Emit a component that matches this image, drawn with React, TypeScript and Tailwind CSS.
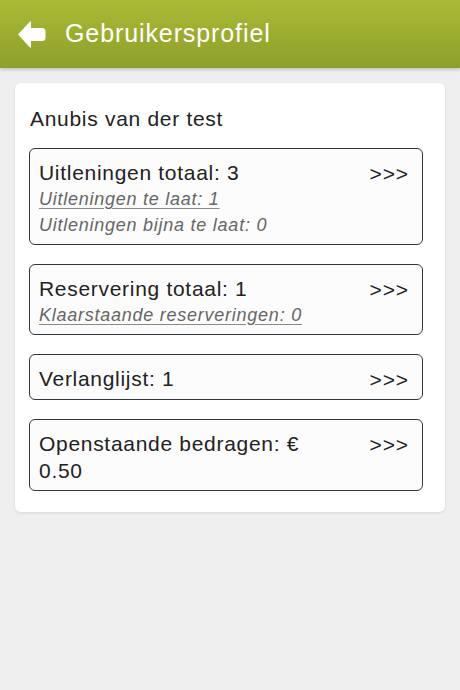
import React from 'react'

const BackArrow: React.FC = () => (
  <svg width="29" height="29" viewBox="0 0 29 29" className="shrink-0">
    <path
      d="M1 14.5 L13 1.5 Q14 0.8 14 2 L14 8 L25 8 Q28.5 8 28.5 11.5 L28.5 17.5 Q28.5 21 25 21 L14 21 L14 27 Q14 28.2 13 27.5 Z"
      fill="#ffffff"
    />
  </svg>
)

interface RowProps {
  title: string
  lines?: { text: string; link?: boolean }[]
}

const Row: React.FC<RowProps> = ({ title, lines = [] }) => (
  <div className="flex rounded-[6px] border border-[#2d3742] bg-[#fcfcfc] pt-[10px] pb-[6px] pl-[9px] pr-[13px]">
    <div className="flex-1">
      <div className="text-[21px] leading-[27px] tracking-[0.7px] text-[#222]">{title}</div>
      {lines.map((l, i) => (
        <div
          key={i}
          className={
            l.link
              ? 'text-[18px] leading-[26px] tracking-[0.75px] italic text-[#666] underline decoration-[#8a8a8a] underline-offset-[3px]'
              : 'text-[18px] leading-[26px] tracking-[0.75px] italic text-[#666]'
          }
        >
          {l.text}
        </div>
      ))}
    </div>
    <div className="w-[82px] pt-[1px] text-right text-[21px] leading-[27px] tracking-[0.9px] text-[#222]">
      &gt;&gt;&gt;
    </div>
  </div>
)

export default function App() {
  return (
    <div
      className="min-h-[690px] w-[460px] bg-[#efefef]"
      style={{ fontFamily: '"Liberation Sans", Arial, sans-serif' }}
    >
      <div className="flex h-[68px] items-center gap-[19px] bg-gradient-to-b from-[#abba35] to-[#8e9f2b] pl-[17px] shadow-[0_2px_3px_rgba(0,0,0,0.18)]">
        <BackArrow />
        <span className="text-[25px] tracking-[0.9px] text-white">Gebruikersprofiel</span>
      </div>

      <div className="px-[15px] pt-[15px]">
        <div className="rounded-[6px] bg-white pt-[22px] pb-[21px] pl-[14px] pr-[22px] shadow-[0_1px_3px_rgba(0,0,0,0.1)]">
          <div className="pl-[1px] text-[21px] leading-[27px] tracking-[0.7px] text-[#222]">
            Anubis van der test
          </div>
          <div className="mt-[16px] flex flex-col gap-[19px]">
            <Row
              title="Uitleningen totaal: 3"
              lines={[
                { text: 'Uitleningen te laat: 1', link: true },
                { text: 'Uitleningen bijna te laat: 0' },
              ]}
            />
            <Row
              title="Reservering totaal: 1"
              lines={[{ text: 'Klaarstaande reserveringen: 0', link: true }]}
            />
            <Row title="Verlanglijst: 1" />
            <Row title="Openstaande bedragen: € 0.50" />
          </div>
        </div>
      </div>
    </div>
  )
}
